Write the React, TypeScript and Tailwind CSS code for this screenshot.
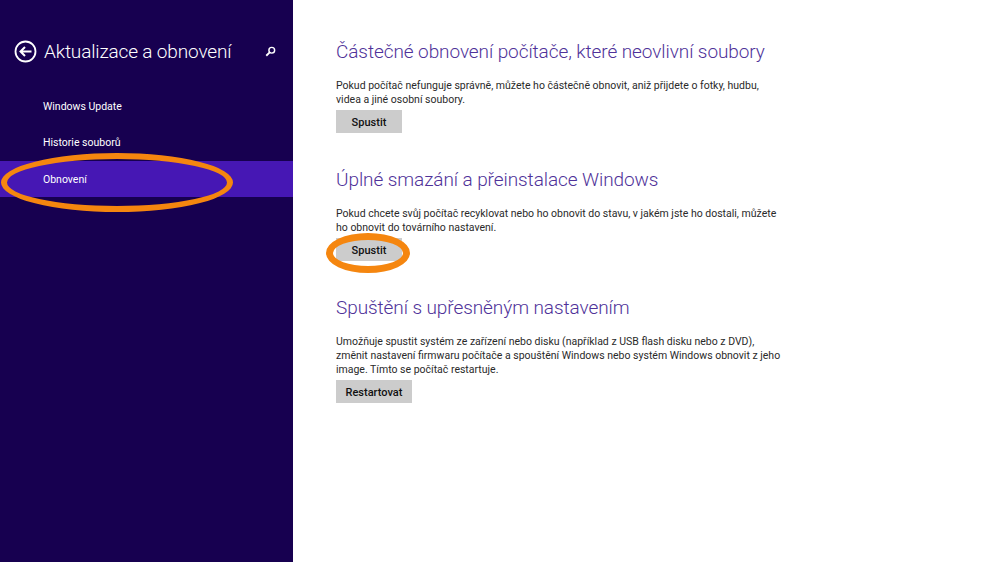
const font = { fontFamily: 'Roboto, "Noto Sans", sans-serif' };

function SettingsBlock({
  title,
  lines,
  action,
  width,
}: {
  title: string;
  lines: string[];
  action: string;
  width: string;
}) {
  return (
    <section className="h-[128px]">
      <h2 className="h-[30px] text-[19px] leading-[30px] font-light tracking-[-0.08px] whitespace-nowrap text-[#4f3299]">{title}</h2>
      <div className="mt-[12px] text-[10.5px] leading-[14px] text-[#2a2a2a]">
        {lines.map((line) => (
          <p key={line} className="whitespace-nowrap">{line}</p>
        ))}
      </div>
      <button className={`mt-[3px] h-[23px] ${width} bg-[#cccccc] pt-[3px] text-[11px] font-medium text-[#111111]`}>
        {action}
      </button>
    </section>
  );
}

export default function App() {
  return (
    <div className="relative flex h-[562px] w-[999px] overflow-hidden bg-white" style={font}>
      <aside className="w-[293px] shrink-0 bg-[#170050] text-white">
        <div className="flex h-[88px] items-start pt-[37px]">
          <svg className="ml-[14px] mt-[3px] h-[23px] w-[23px]" viewBox="0 0 23 23" fill="none" stroke="white">
            <circle cx="11.5" cy="11.5" r="10" strokeWidth="1.8" />
            <path d="M17.5 11.5H6.5M11 7l-4.5 4.5L11 16" strokeWidth="2" />
          </svg>
          <h1 className="ml-[7px] text-[19px] leading-[30px] font-light tracking-[-0.15px] whitespace-nowrap">Aktualizace a obnovení</h1>
          <svg className="ml-[34px] mt-[9px] h-[11px] w-[11px]" viewBox="0 0 13 13" fill="none" stroke="white">
            <circle cx="8" cy="5" r="3.4" strokeWidth="1.7" />
            <path d="M5.5 7.5L1.5 11.5" strokeWidth="2.2" />
          </svg>
        </div>
        <nav className="text-[10.5px]">
          <div className="flex h-[36px] items-center pt-[1px] pl-[43px]">Windows Update</div>
          <div className="flex h-[37px] items-center pt-[1px] pl-[43px]">Historie souborů</div>
          <div className="flex h-[36px] items-center bg-[#4617b4] pt-[1px] pl-[43px]">Obnovení</div>
        </nav>
      </aside>
      <main className="flex-1 pt-[37px] pl-[43px]">
        <SettingsBlock
          title="Částečné obnovení počítače, které neovlivní soubory"
          lines={[
            "Pokud počítač nefunguje správně, můžete ho částečně obnovit, aniž přijdete o fotky, hudbu,",
            "videa a jiné osobní soubory.",
          ]}
          action="Spustit"
          width="w-[66px]"
        />
        <SettingsBlock
          title="Úplné smazání a přeinstalace Windows"
          lines={[
            "Pokud chcete svůj počítač recyklovat nebo ho obnovit do stavu, v jakém jste ho dostali, můžete",
            "ho obnovit do továrního nastavení.",
          ]}
          action="Spustit"
          width="w-[66px]"
        />
        <SettingsBlock
          title="Spuštění s upřesněným nastavením"
          lines={[
            "Umožňuje spustit systém ze zařízení nebo disku (například z USB flash disku nebo z DVD),",
            "změnit nastavení firmwaru počítače a spouštění Windows nebo systém Windows obnovit z jeho",
            "image. Tímto se počítač restartuje.",
          ]}
          action="Restartovat"
          width="w-[76px]"
        />
      </main>
      <div className="absolute top-[153px] left-[1px] h-[59px] w-[232px] rounded-[50%] border-[6px] border-[#f5860f]" />
      <div className="absolute top-[233px] left-[326px] h-[40px] w-[84px] rounded-[50%] border-[7px] border-[#f5860f]" />
    </div>
  );
}
